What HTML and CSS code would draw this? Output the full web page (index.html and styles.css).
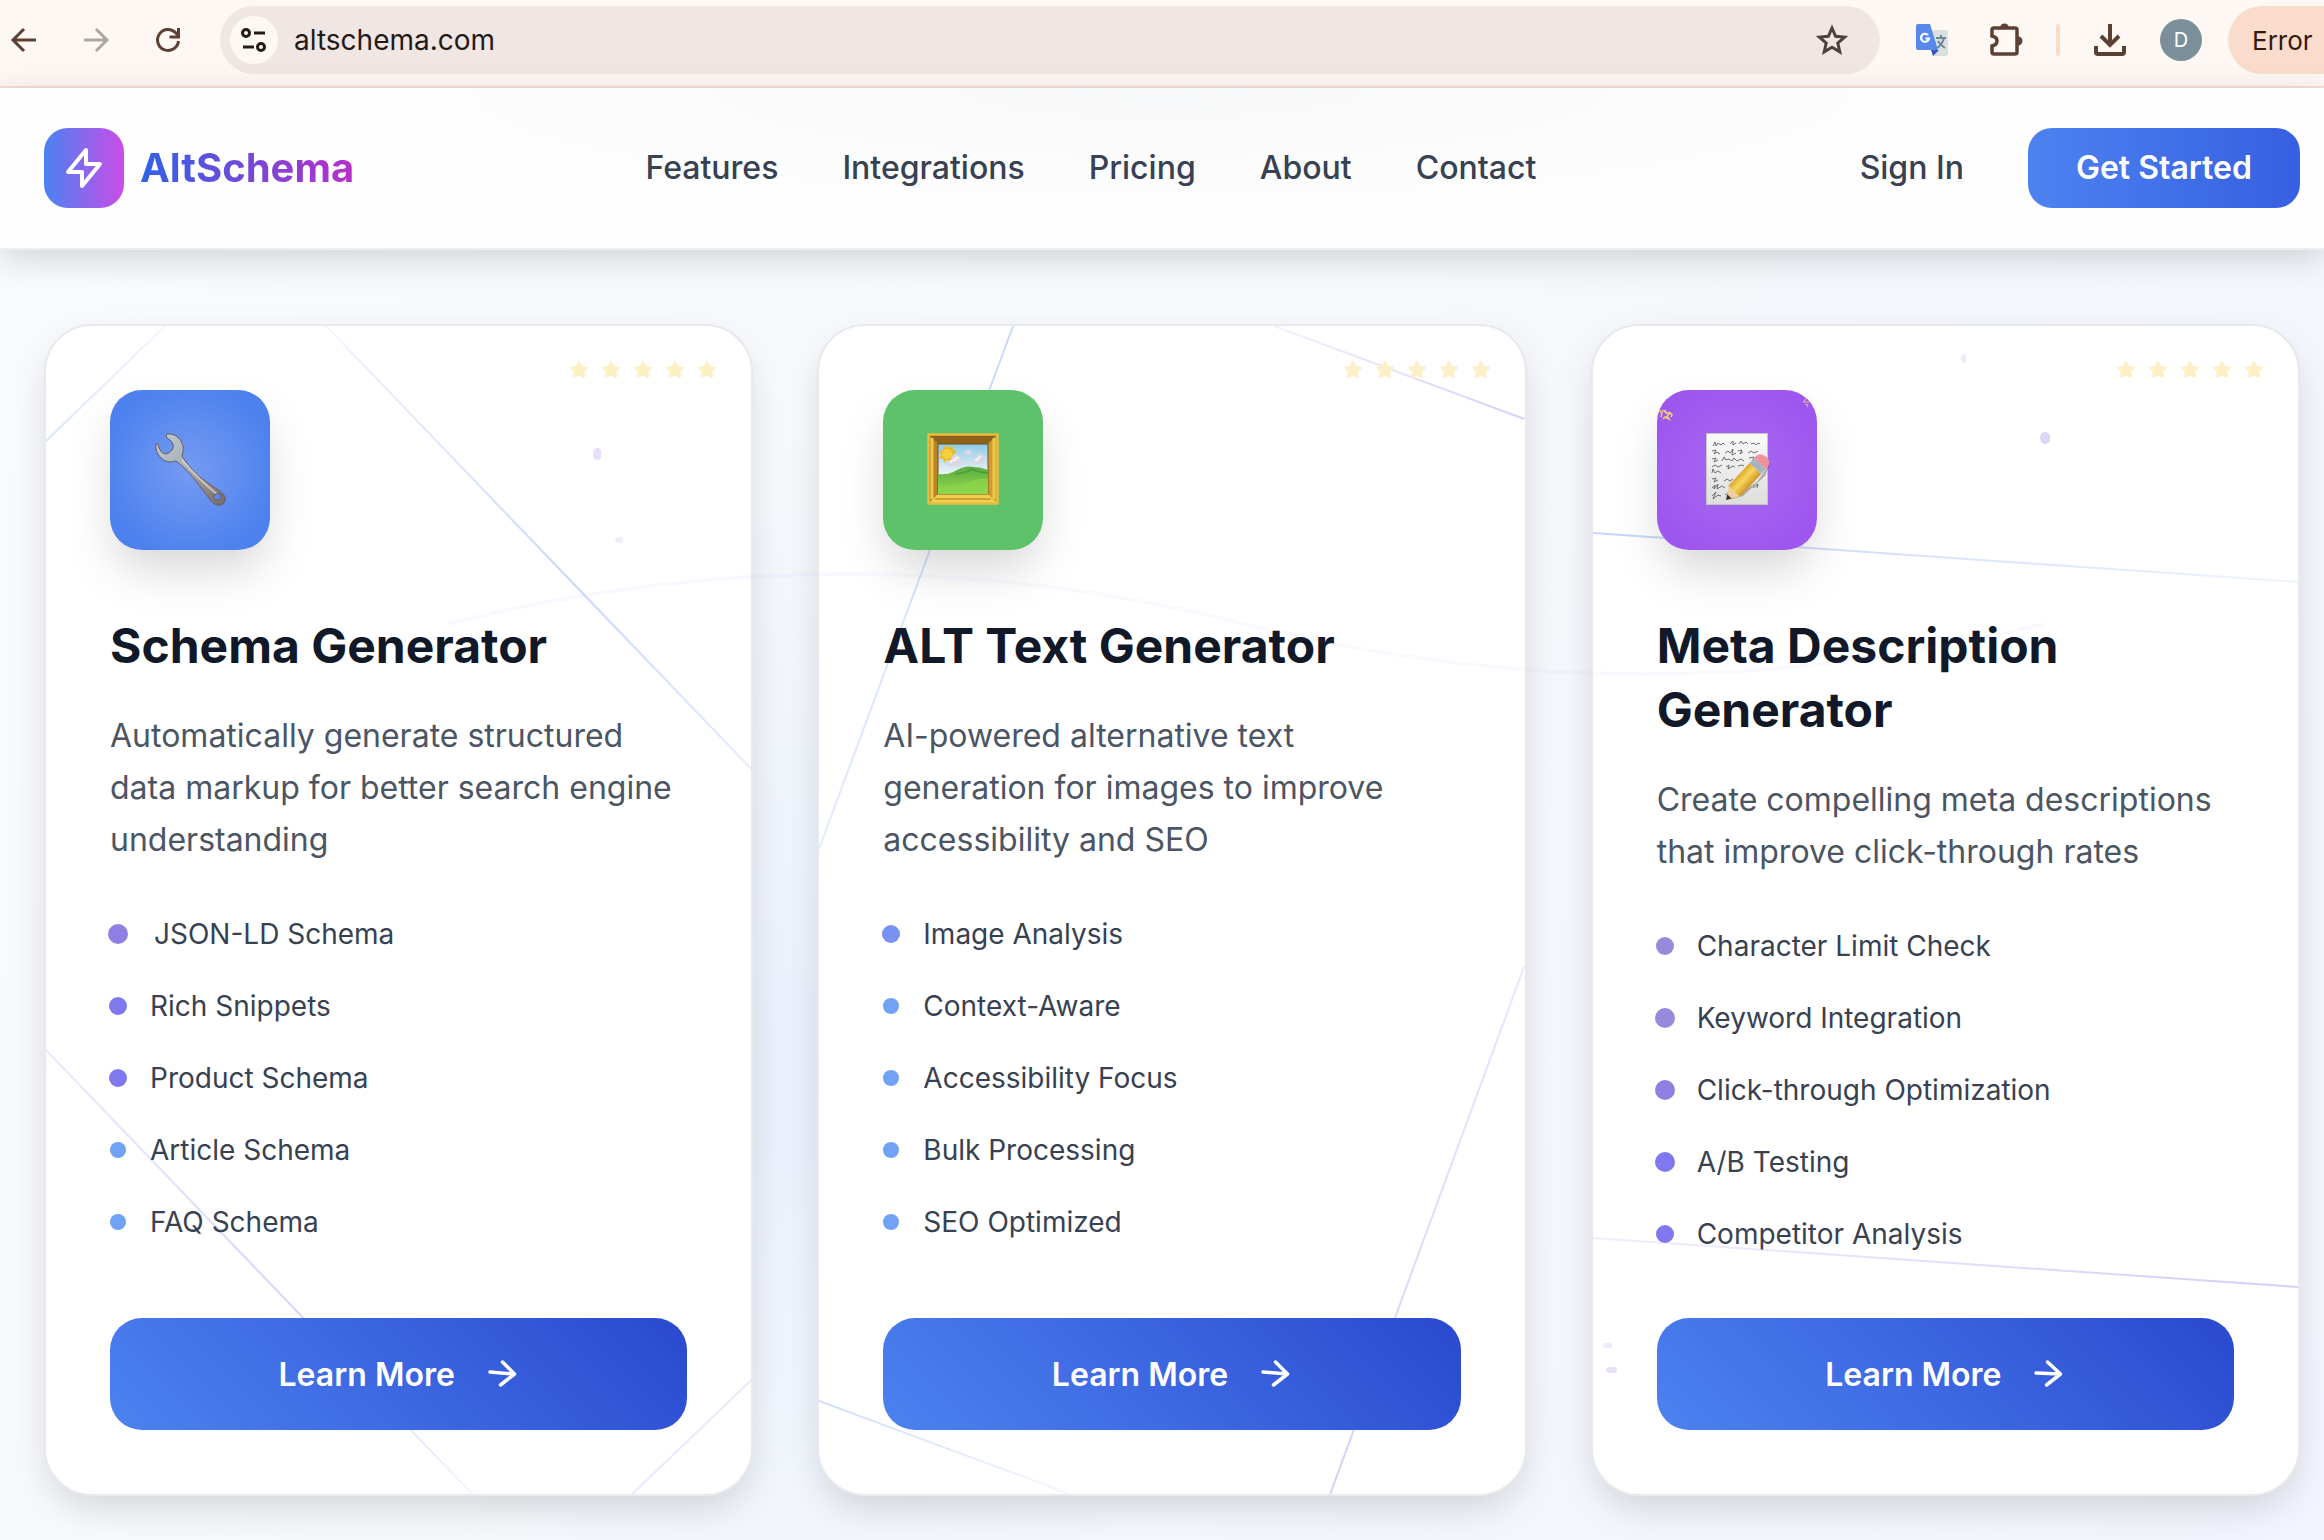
FILE: index.html
```html
<!DOCTYPE html>
<html lang="en">
<head>
<meta charset="utf-8">
<title>AltSchema</title>
<link rel="stylesheet" href="styles.css">
</head>
<body>
<div class="toolbar">
  <div class="toolbar-nav">
    <button class="tool" aria-label="Back"><svg width="32" height="32" viewBox="0 0 32 32" fill="none" stroke="#5c4033" stroke-width="3"><path d="M28 16H6M16 5 5 16l11 11"/></svg></button>
    <button class="tool" aria-label="Forward"><svg width="32" height="32" viewBox="0 0 32 32" fill="none" stroke="#aea6a2" stroke-width="3"><path d="M4 16h22M16 5l11 11-11 11"/></svg></button>
    <button class="tool" aria-label="Reload"><svg width="32" height="32" viewBox="0 0 32 32" fill="none" stroke="#5c4033" stroke-width="3"><path d="M26.500 17A10.500 10.500 0 1 1 23.500 8.600L26.500 12"/><path d="M26.500 4v9H17.500" /></svg></button>
  </div>
  <div class="omnibox">
    <button class="site-info" aria-label="Site information"><svg width="32" height="32" viewBox="0 0 32 32" fill="none" stroke="#241a17" stroke-width="3"><circle cx="8" cy="9" r="3.500"/><path d="M16 9h11M5 23h11"/><circle cx="23" cy="23" r="3.500"/></svg></button>
    <input class="url" type="text" aria-label="Address" value="altschema.com">
    <button class="tool" aria-label="Bookmark"><svg width="36" height="36" viewBox="0 0 36 36" fill="none" stroke="#4c4340" stroke-width="3"><path d="m18 6 3.600 8.300 9 .8-6.800 6 2 8.800L18 25.200l-7.800 4.700 2-8.800-6.800-6 9-.8z"/></svg></button>
  </div>
  <div class="toolbar-end">
    <button class="tool" aria-label="Translate"><svg width="36" height="36" viewBox="0 0 36 36"><path d="M14 8h18q2 0 2 2v22q0 2-2 2H19z" fill="#dcdfdf"/><path d="M22 16h10M27 13v3M30 16q-2 7-7 10M24 19q2 4 7 7" fill="none" stroke="#6f8793" stroke-width="2"/><path d="m17 28 8 0-6 6z" fill="#3457b5"/><path d="M4 2h12l8 26H4q-2 0-2-2V4q0-2 2-2z" fill="#5988ed"/><path d="M14 13a4 4 0 1 0 1 3.500H11.500" fill="none" stroke="#fff" stroke-width="2.200"/></svg></button>
    <button class="tool" aria-label="Extensions"><svg width="36" height="36" viewBox="0 0 36 36" fill="none" stroke="#5c4033" stroke-width="3.500"><path d="M4 8q0-2 2-2h21q2 0 2 2v22q0 2-2 2H6q-2 0-2-2v-6q5-1 5-5t-5-5z"/><path d="M12 6a4.500 4.500 0 0 1 9 0zM30 14.500a4.500 4.500 0 0 1 0 9z" fill="#5c4033" stroke="none"/></svg></button>
    <span class="divider"></span>
    <button class="tool" aria-label="Downloads"><svg width="36" height="36" viewBox="0 0 36 36" fill="none" stroke="#5c4033" stroke-width="4"><path d="M18 2v20M9 14l9 9 9-9M4 24v6q0 2 2 2h24q2 0 2-2v-6"/></svg></button>
    <button class="avatar" aria-label="Profile">D</button>
    <button class="error-pill">Error</button>
  </div>
</div>

<header class="site-header">
  <a class="brand" href="#">
    <span class="brand-mark"><svg width="48" height="48" viewBox="0 0 24 24" fill="none" stroke="#fff" stroke-width="2" stroke-linecap="round" stroke-linejoin="round"><path d="M13 10V3L4 14h7v7l9-11h-7z"/></svg></span>
    <span class="brand-name">AltSchema</span>
  </a>
  <nav class="links">
    <a href="#">Features</a>
    <a href="#">Integrations</a>
    <a href="#">Pricing</a>
    <a href="#">About</a>
    <a href="#">Contact</a>
  </nav>
  <div class="account">
    <a class="sign-in" href="#">Sign In</a>
    <button class="get-started">Get Started</button>
  </div>
</header>

<main class="tools">
  <article class="card">
    <svg class="lines" viewBox="0 0 705 1168" preserveAspectRatio="none" fill="none" stroke-width="2">
      <defs>
        <linearGradient id="a1" gradientUnits="userSpaceOnUse" x1="0" y1="115" x2="119" y2="0"><stop stop-color="#dbe6fd"/><stop offset="1" stop-color="#f2f5fe"/></linearGradient>
        <linearGradient id="a2" gradientUnits="userSpaceOnUse" x1="280" y1="0" x2="705" y2="443"><stop stop-color="#f1f5fe"/><stop offset=".6" stop-color="#c6d7fa"/><stop offset="1" stop-color="#e6edfd"/></linearGradient>
        <linearGradient id="a3" gradientUnits="userSpaceOnUse" x1="0" y1="724" x2="426" y2="1168"><stop stop-color="#ece9fd"/><stop offset=".6" stop-color="#d9d2fb"/><stop offset="1" stop-color="#f4f2fe"/></linearGradient>
      </defs>
      <path d="M0 115 119 0" stroke="url(#a1)"/>
      <path d="M280 0 705 443" stroke="url(#a2)"/>
      <path d="M0 724 426 1168" stroke="url(#a3)"/>
      <path d="M586 1168 705 1054" stroke="#ece9fd"/>
      <rect x="547" y="122" width="8" height="12" rx="4" fill="#e9dff8"/>
      <rect x="569" y="211" width="8" height="6" rx="3" fill="#f1ecfb"/>
    </svg>
    <svg class="stars" width="152" height="24" viewBox="0 0 152 24" aria-hidden="true">
      <defs><path id="star" d="m12 4 2.600 5 5.400.800-3.900 3.800.9 5.400-5-2.500L7 19l.9-5.400L4 9.800 9.400 9z" fill="#fdefc6" stroke="#fdefc6" stroke-width="2" stroke-linejoin="round"/></defs>
      <use href="#star"/><use href="#star" x="32"/><use href="#star" x="64"/><use href="#star" x="96"/><use href="#star" x="128"/>
    </svg>
    <div class="icon icon-blue">
      <svg width="160" height="160" viewBox="0 0 160 160">
        <defs><linearGradient id="w" x1="0" y1="0" x2="1" y2="1"><stop stop-color="#c3ccd4"/><stop offset=".4" stop-color="#a9b1b8"/><stop offset=".75" stop-color="#8f8788"/><stop offset="1" stop-color="#746866"/></linearGradient></defs>
        <path d="M57 44q9-1 14 7 4 7 1 15l4 6q6 8 15 16l20 14q7 6 3 11-6 5-12-1L85 90q-7-9-14-15l-5-4q-9 3-15-3-6-6-5-14l2 0q2 9 7 10 4 0 7-4 3-5-1-9l-5-4z" fill="url(#w)" stroke="#665f63" stroke-width="1"/>
        <path d="M72 70q16 19 36 35" fill="none" stroke="#d8d5d4" stroke-width="2" opacity=".7"/>
        <ellipse cx="107.500" cy="107" rx="3.800" ry="3" transform="rotate(-20 107 107)" fill="#5b88f0" stroke="#6a6060"/>
      </svg>
    </div>
    <h2>Schema Generator</h2>
    <p>Automatically generate structured data markup for better search engine understanding</p>
    <ul>
      <li class="nudged"><i class="dot d20 violet"></i>JSON-LD Schema</li>
      <li><i class="dot d18 indigo"></i>Rich Snippets</li>
      <li><i class="dot d18 indigo"></i>Product Schema</li>
      <li><i class="dot"></i>Article Schema</li>
      <li><i class="dot"></i>FAQ Schema</li>
    </ul>
    <button class="learn">Learn More<svg width="40" height="40" viewBox="0 0 40 40" fill="none" stroke="#fff" stroke-width="3.500" stroke-linecap="round" stroke-linejoin="round"><path d="M11 18 35.500 20M23.500 8l12 12-14 11"/></svg></button>
  </article>

  <article class="card">
    <svg class="lines" viewBox="0 0 705 1168" preserveAspectRatio="none" fill="none" stroke-width="2">
      <defs>
        <linearGradient id="b1" gradientUnits="userSpaceOnUse" x1="194" y1="0" x2="0" y2="523"><stop stop-color="#c8d9fb"/><stop offset="1" stop-color="#e4ecfd"/></linearGradient>
        <linearGradient id="b2" gradientUnits="userSpaceOnUse" x1="453" y1="0" x2="705" y2="93"><stop stop-color="#f3f1fe"/><stop offset="1" stop-color="#d9d1fb"/></linearGradient>
        <linearGradient id="b3" gradientUnits="userSpaceOnUse" x1="705" y1="640" x2="511" y2="1168"><stop stop-color="#eae7fd"/><stop offset="1" stop-color="#d6cffa"/></linearGradient>
        <linearGradient id="b4" gradientUnits="userSpaceOnUse" x1="0" y1="1075" x2="251" y2="1168"><stop stop-color="#cfdefb"/><stop offset="1" stop-color="#f3f6fe"/></linearGradient>
      </defs>
      <path d="M194 0 0 523" stroke="url(#b1)"/>
      <path d="M455 0 705 93" stroke="url(#b2)"/>
      <path d="M705 640 511 1168" stroke="url(#b3)"/>
      <path d="M0 1075 251 1168" stroke="url(#b4)"/>
    </svg>
    <svg class="stars" width="152" height="24" viewBox="0 0 152 24" aria-hidden="true"><use href="#star"/><use href="#star" x="32"/><use href="#star" x="64"/><use href="#star" x="96"/><use href="#star" x="128"/></svg>
    <div class="icon icon-green">
      <svg width="160" height="160" viewBox="0 0 160 160">
        <defs>
          <linearGradient id="sky" x1="0" y1="0" x2="0" y2="1"><stop stop-color="#8ccbe8"/><stop offset=".6" stop-color="#eef2f3"/></linearGradient>
          <linearGradient id="grass" x1="0" y1="0" x2="0" y2="1"><stop stop-color="#5aac3f"/><stop offset="1" stop-color="#93d94f"/></linearGradient>
        </defs>
        <path d="M45 44h70L105 54H55z" fill="#8f6119"/>
        <path d="M45 44v70l10-10V54z" fill="#b98328"/>
        <path d="M115 44v70l-10-10V54z" fill="#cf9a31"/>
        <path d="M45 114h70l-10-10H55z" fill="#f3d04c"/>
        <rect x="45.500" y="44.500" width="69" height="69" fill="none" stroke="#e6bd42" stroke-width="2.500"/>
        <path d="M49 48v61M111 48v61" fill="none" stroke="#efc94a" stroke-width="3"/>
        <path d="M52 109h56" fill="none" stroke="#a87420" stroke-width="1"/>
        <rect x="55" y="54" width="50" height="50" fill="url(#sky)" stroke="#6d531e"/>
        <path d="m64 55 2 3 4-2 0 4 4 1-3 3 2 4-4 0-1 4-4-2-3 3-1-4-4-1 2-3-2-4 4-1 0-4 3 1z" fill="#e9bb2b"/>
        <circle cx="64" cy="64" r="5" fill="#f8d03c"/>
        <path d="M64 75q-1-5 4-5 1-7 6-5 4 2 3 5 5 2 1 6-7 2-14-1zM89 71q0-4 5-3 1-7 5-3 4 1 3 5-1 4-7 3-5 1-6-2zM81 64q1-4 4-4 3-2 3 2 2 3-2 3z" fill="#d9d9e6"/>
        <path d="M67 73q2-3 5-3 1-3 4-2M92 70q4 0 5-4" fill="none" stroke="#f4f4fa" stroke-width="2"/>
        <path d="M55 84q9 1 15-2 13-7 20-5 8 0 15 3v24H55z" fill="url(#grass)"/>
        <path d="M55 95q16 2 29-3t21-3v15H55z" fill="#8dd64a" opacity=".7"/>
        <path d="M72 84q11-1 17-5 9 4 16 4" fill="none" stroke="#3e913c" stroke-width="2" opacity=".6"/>
      </svg>
    </div>
    <h2>ALT Text Generator</h2>
    <p>AI-powered alternative text generation for images to improve accessibility and SEO</p>
    <ul>
      <li><i class="dot d18 periwinkle"></i>Image Analysis</li>
      <li><i class="dot"></i>Context-Aware</li>
      <li><i class="dot"></i>Accessibility Focus</li>
      <li><i class="dot"></i>Bulk Processing</li>
      <li><i class="dot"></i>SEO Optimized</li>
    </ul>
    <button class="learn">Learn More<svg width="40" height="40" viewBox="0 0 40 40" fill="none" stroke="#fff" stroke-width="3.500" stroke-linecap="round" stroke-linejoin="round"><path d="M11 18 35.500 20M23.500 8l12 12-14 11"/></svg></button>
  </article>

  <article class="card">
    <svg class="lines" viewBox="0 0 705 1168" preserveAspectRatio="none" fill="none" stroke-width="2">
      <defs>
        <linearGradient id="c1" gradientUnits="userSpaceOnUse" x1="0" y1="207" x2="705" y2="256"><stop stop-color="#c3d5fa"/><stop offset="1" stop-color="#eef3fe"/></linearGradient>
        <linearGradient id="c2" gradientUnits="userSpaceOnUse" x1="0" y1="912" x2="705" y2="961"><stop stop-color="#f0eefe"/><stop offset="1" stop-color="#d5cdfa"/></linearGradient>
      </defs>
      <path d="M0 207 705 256" stroke="url(#c1)"/>
      <path d="M0 912 705 961" stroke="url(#c2)"/>
      <rect x="368" y="28" width="5" height="9" rx="2" fill="#f0eafc"/>
      <rect x="447" y="106" width="10" height="12" rx="5" fill="#ddd5f8"/>
      <rect x="10" y="1017" width="9" height="5" rx="2" fill="#f0eafb"/>
      <rect x="13" y="1041" width="11" height="6" rx="3" fill="#e9e0f8"/>
    </svg>
    <svg class="stars" width="152" height="24" viewBox="0 0 152 24" aria-hidden="true"><use href="#star"/><use href="#star" x="32"/><use href="#star" x="64"/><use href="#star" x="96"/><use href="#star" x="128"/></svg>
    <div class="icon icon-purple">
      <svg width="160" height="160" viewBox="0 0 160 160">
        <defs>
          <linearGradient id="paper" x1="0" y1="0" x2="0" y2="1"><stop stop-color="#fafafa"/><stop offset="1" stop-color="#dededd"/></linearGradient>
          <linearGradient id="pencil" x1="0" y1="0" x2="0" y2="1"><stop stop-color="#dca932"/><stop offset=".45" stop-color="#f8d65c"/><stop offset="1" stop-color="#cf9627"/></linearGradient>
        </defs>
        <path d="m2 20 3 3-1 4M5 20l3 2M8 20l1 3 4 0-3 3 2 3-4-2-2 2M12 22l3 3-1 2" fill="none" stroke="#f1d269" stroke-width="1.500"/>
        <path d="m150 8-4 4h6M148 14l3 1-1 2" fill="none" stroke="#e5c38a" stroke-width="1"/>
        <rect x="49.500" y="43.500" width="61" height="71" fill="url(#paper)" stroke="#c5c5c5"/>
        <g fill="none" stroke="#5f5f5f" stroke-width=".9">
          <path d="m56 56 2-4 1 4 2-3 3 2 2-2 2 2M73 54l3-3 0 4 3-2M82 54l2-3 2 3 3-2 2 2M94 54l3-1 2 2 2-2 2 1"/>
          <path d="m55 61 4-1-2 4 3-2 3 2M68 63l3-2 2 2 3-4-1 6 4-2M81 61l4-1-2 4 3-2M91 63l3-2 3 2 4-2"/>
          <path d="m55 69 4-1-2 4 4-2M65 71l2-4 2 3 3-1 3 2 2-3 3 3 4-2 3 2M92 68l5-1-2 5"/>
          <path d="m55 77 3-2 3 2 4-2M69 77l3-2-1 4 5-3 2 1M81 76l4-1 2 1"/>
          <path d="m55 83 1-4 2 4 3-2 3 2M55 89l4-1-2 4 4-2M67 91l3-2 3 2 3-2"/>
          <path d="m55 98 3-3-1 4 4-5-1 5 5-3 3 2M55 106l4-4-3 7 5-4 3 1M68 105l4-3-1 5M96 98l5-4-1 4"/>
        </g>
        <path d="m72 110 28-18 14-20-6 14-22 20z" fill="#555" opacity=".4"/>
        <g transform="translate(69 110) rotate(-47)">
          <path d="M0 0 13-8v16z" fill="#efd09a"/>
          <path d="M0 0 5-3v6z" fill="#34302e"/>
          <path d="M12-8H43V8H12z" fill="url(#pencil)"/>
          <path d="M43-8h7V8h-7z" fill="#a7b3bd"/>
          <path d="M50-8h3q6 1 6 8t-6 8h-3z" fill="#ee9299"/>
        </g>
      </svg>
    </div>
    <h2>Meta Description Generator</h2>
    <p>Create compelling meta descriptions that improve click-through rates</p>
    <ul>
      <li><i class="dot d18 mauve"></i>Character Limit Check</li>
      <li><i class="dot d20 mauve"></i>Keyword Integration</li>
      <li><i class="dot d20 violet"></i>Click-through Optimization</li>
      <li><i class="dot d20 indigo"></i>A/B Testing</li>
      <li><i class="dot d18 indigo"></i>Competitor Analysis</li>
    </ul>
    <button class="learn">Learn More<svg width="40" height="40" viewBox="0 0 40 40" fill="none" stroke="#fff" stroke-width="3.500" stroke-linecap="round" stroke-linejoin="round"><path d="M11 19 35.500 20M22.500 8l13 12-14 11"/></svg></button>
  </article>

  <svg class="wave" viewBox="0 0 2324 1290" preserveAspectRatio="none" fill="none">
    <defs><linearGradient id="wv"><stop stop-color="#6f8ff0"/><stop offset="1" stop-color="#9a78f0"/></linearGradient></defs>
    <path d="M447 374Q846 274 1245 374T2043 374" stroke="url(#wv)" stroke-width="4" opacity=".045"/>
  </svg>
</main>
</body>
</html>
```
FILE: styles.css
```css
* {
  box-sizing: border-box;
}

body {
  margin: 0;
  font-family: Inter, "Liberation Sans", sans-serif;
  color: #374151;
  background: #f6f8fc;
}

button {
  font: inherit;
  border: 0;
  padding: 0;
  cursor: pointer;
}

a {
  color: inherit;
  text-decoration: none;
}

/* Browser toolbar */
.toolbar {
  display: flex;
  align-items: center;
  gap: 28px;
  padding: 6px 0 12px;
  background: #fef8f4;
  border-bottom: 2px solid #f4e1d8;
  overflow: hidden;
}

.toolbar-nav {
  display: flex;
  gap: 24px;
}

.toolbar-end {
  display: flex;
  align-items: center;
  gap: 26px;
}

.tool {
  display: flex;
  align-items: center;
  justify-content: center;
  width: 48px;
  height: 48px;
  background: none;
}

.omnibox {
  display: flex;
  align-items: center;
  flex: 1;
  height: 68px;
  padding: 0 24px 0 10px;
  border-radius: 34px;
  background: #f0e6e4;
}

.site-info {
  display: flex;
  align-items: center;
  justify-content: center;
  width: 48px;
  height: 48px;
  border-radius: 50%;
  background: #fef8f4;
}

.url {
  flex: 1;
  min-width: 0;
  padding: 0 16px;
  border: 0;
  background: none;
  font-family: inherit;
  font-size: 28px;
  line-height: 40px;
  color: #241a17;
}

.divider {
  width: 4px;
  height: 32px;
  border-radius: 2px;
  background: #fadccd;
}

.avatar {
  width: 42px;
  height: 42px;
  border-radius: 50%;
  background: #7b8f9a;
  color: #fff;
  font-size: 20px;
}

.error-pill {
  width: 96px;
  height: 68px;
  padding-left: 24px;
  border-radius: 34px 0 0 34px;
  background: #fadccd;
  color: #34180c;
  font-size: 26px;
  text-align: left;
}

/* Site header */
.site-header {
  position: relative;
  z-index: 1;
  display: flex;
  align-items: center;
  justify-content: space-between;
  padding: 40px 24px 40px 44px;
  border-bottom: 2px solid #eceef0;
  background: radial-gradient(ellipse 36% 130px at 50% 0, #f7f8f9, #fefefe);
  box-shadow: 0 8px 32px rgba(0, 0, 0, 0.16);
  font-size: 32px;
  line-height: 48px;
  font-weight: 500;
}

.brand {
  display: flex;
  align-items: center;
  gap: 16px;
}

.brand-mark {
  display: flex;
  align-items: center;
  justify-content: center;
  width: 80px;
  height: 80px;
  border-radius: 24px;
  background: linear-gradient(to right, #4a82f2, #c94de8);
}

.brand-name {
  font-size: 40px;
  font-weight: 700;
  background: linear-gradient(to right, #2f62e8, #b82fca);
  background-clip: text;
  color: transparent;
}

.links {
  display: flex;
  gap: 64px;
}

.account {
  display: flex;
  align-items: center;
  gap: 32px;
}

.sign-in {
  padding: 0 32px;
}

.get-started {
  height: 80px;
  padding: 0 48px;
  border-radius: 24px;
  background: linear-gradient(to right, #4d82f0, #365fe2);
  color: #fff;
  font-weight: 600;
}

/* Tool cards */
.tools {
  position: relative;
  display: grid;
  grid-template-columns: repeat(3, 1fr);
  gap: 64px;
  padding: 74px 24px 44px 44px;
  background:
    radial-gradient(ellipse 20% 50% at 34% 64%, rgba(222, 233, 253, 0.5), transparent),
    linear-gradient(120deg, #f9fafc, #f6f8fc 50%, #f2f5fd);
}

.card {
  position: relative;
  display: flex;
  flex-direction: column;
  padding: 64px;
  border: 2px solid #e7e9ec;
  border-radius: 48px;
  background: #fff;
  box-shadow: 0 16px 40px -8px rgba(0, 0, 0, 0.17);
}

.card > * {
  position: relative;
}

.card > .lines {
  position: absolute;
  inset: 0;
  width: 100%;
  height: 100%;
}

.card > .stars {
  position: absolute;
  top: 32px;
  right: 32px;
}

.icon {
  width: 160px;
  height: 160px;
  border-radius: 32px;
  box-shadow: 0 24px 48px -6px rgba(0, 0, 0, 0.17);
}

.icon svg {
  display: block;
}

.icon-blue {
  background: radial-gradient(circle at 50% 50%, #759bf2, #4d81ee 88px);
}

.icon-green {
  background: #5ec26a;
}

.icon-purple {
  background: radial-gradient(circle at 50% 50%, #a869f0, #9d57ef 88px);
}

.card h2 {
  margin: 64px 0 32px;
  font-size: 48px;
  line-height: 64px;
  font-weight: 700;
  color: #111827;
}

.card p {
  margin: 0 0 48px;
  font-size: 32px;
  line-height: 52px;
  color: #4b5563;
}

.card ul {
  display: flex;
  flex-direction: column;
  gap: 32px;
  margin: 0 0 64px;
  padding: 0;
  list-style: none;
  font-size: 28px;
  line-height: 40px;
}

.card li {
  display: flex;
  align-items: center;
  gap: 24px;
}

.card .nudged {
  gap: 28px;
}

.dot {
  width: 16px;
  height: 16px;
  border-radius: 50%;
  background: #70a3f5;
}

.d18 {
  width: 18px;
  height: 18px;
  margin: 0 -1px;
}

.d20 {
  width: 20px;
  height: 20px;
  margin: 0 -2px;
}

.violet {
  background: #8f7fe2;
}

.indigo {
  background: #8078ee;
}

.periwinkle {
  background: #7892f2;
}

.mauve {
  background: #988adb;
}

.learn {
  display: flex;
  align-items: center;
  justify-content: center;
  gap: 24px;
  height: 112px;
  margin-top: auto;
  border-radius: 32px;
  background: linear-gradient(45deg, #4c82f0, #3c66e0 50%, #2949cf);
  color: #fff;
  font-size: 32px;
  font-weight: 600;
}

.wave {
  position: absolute;
  inset: 0;
  width: 100%;
  height: 100%;
  pointer-events: none;
}
```
